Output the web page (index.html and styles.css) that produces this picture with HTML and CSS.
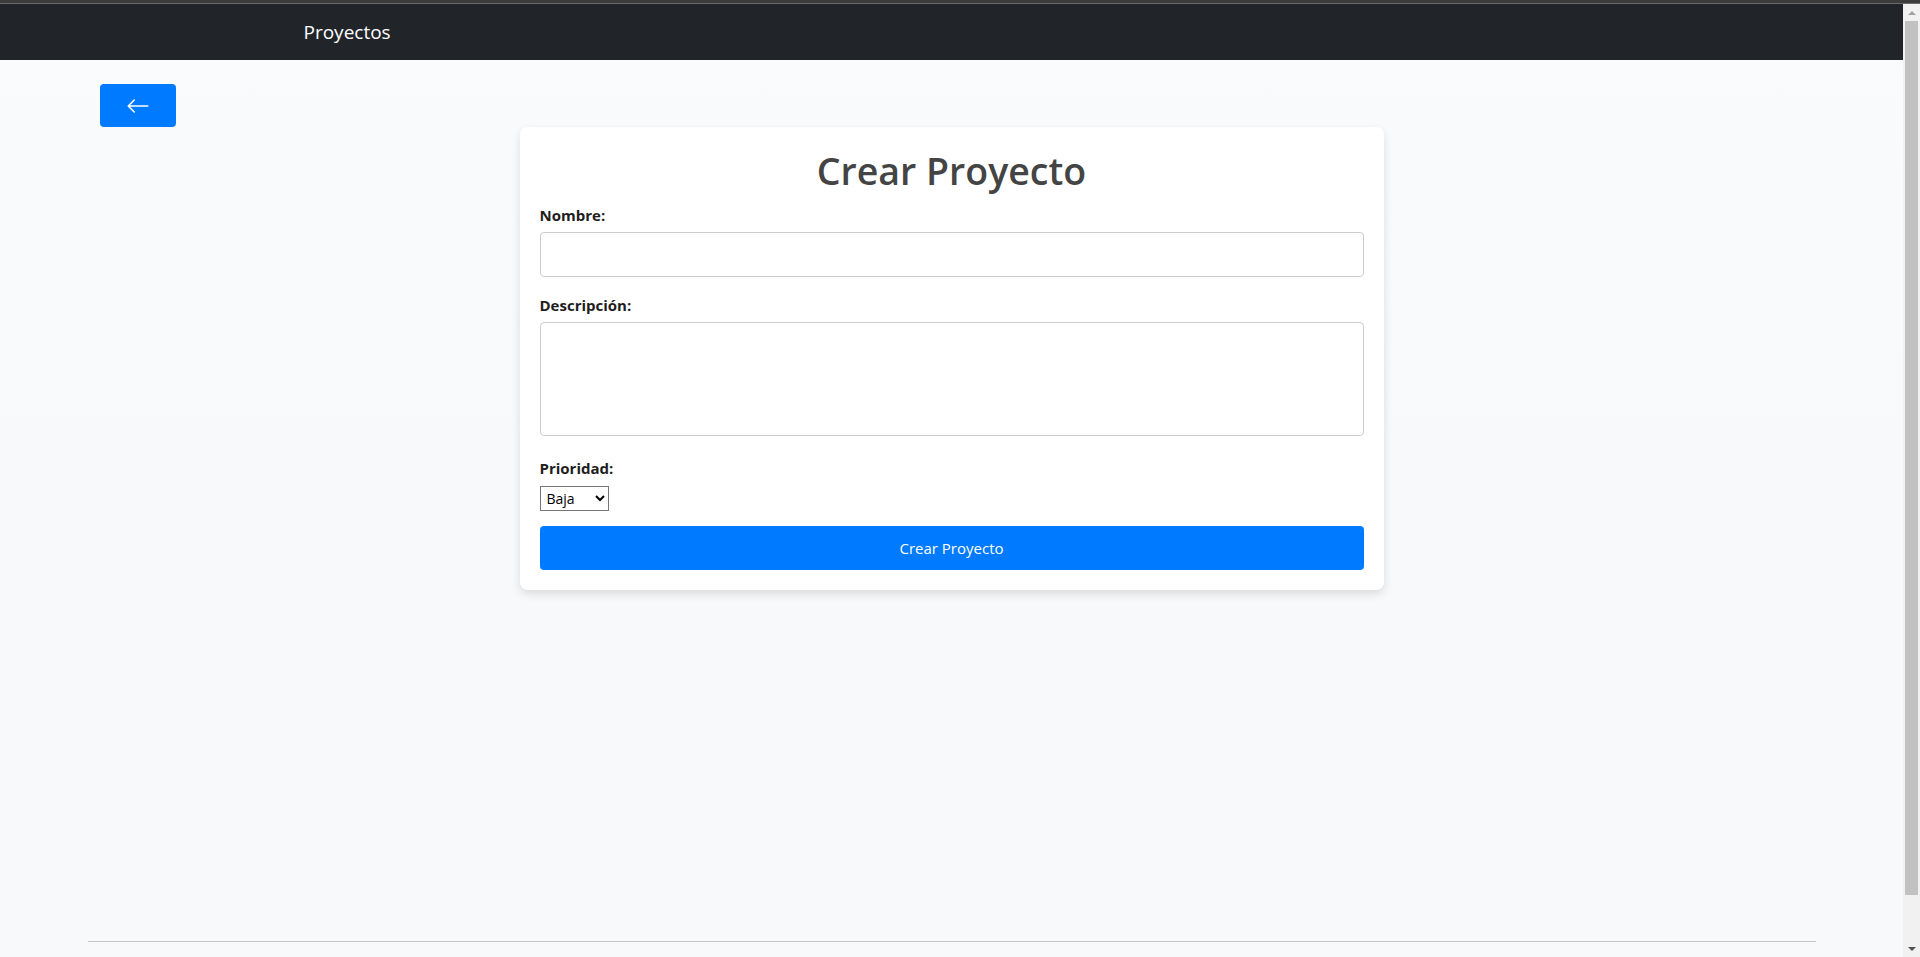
FILE: index.html
```html
<!DOCTYPE html>
<html lang="es">
<head>
<meta charset="utf-8">
<title>Crear Proyecto</title>
<link rel="stylesheet" href="styles.css">
</head>
<body>
<div class="window">
  <div class="topband"></div>
  <div class="viewport">
    <div class="page">
      <nav class="navbar">
        <div class="container">
          <a class="brand" href="#">Proyectos</a>
        </div>
      </nav>
      <main class="main">
        <div class="back-row">
          <button class="btn-back" type="button" aria-label="Volver">
            <svg width="24" height="24" viewBox="0 0 16 16" fill="currentColor"><path fill-rule="evenodd" d="M15 8a.5.5 0 0 0-.5-.5H2.707l3.147-3.146a.5.5 0 1 0-.708-.708l-4 4a.5.5 0 0 0 0 .708l4 4a.5.5 0 0 0 .708-.708L2.707 8.5H14.5A.5.5 0 0 0 15 8z"/></svg>
          </button>
        </div>
        <div class="card">
          <h1 class="title">Crear Proyecto</h1>
          <form class="form">
            <label class="label" for="nombre">Nombre:</label>
            <input class="input" id="nombre" type="text">
            <label class="label" for="descripcion">Descripción:</label>
            <textarea class="textarea" id="descripcion"></textarea>
            <label class="label label-prio" for="prioridad">Prioridad:</label>
            <select class="select" id="prioridad">
              <option>Baja</option>
              <option>Media</option>
              <option>Alta</option>
            </select>
            <button class="btn-submit" type="button">Crear Proyecto</button>
          </form>
        </div>
      </main>
      <footer class="footer"><div class="footer-line"></div></footer>
    </div>
    <div class="scrollbar">
      <div class="sb-btn"><span class="tri-up"></span></div>
      <div class="sb-track"><div class="sb-thumb"></div></div>
      <div class="sb-btn"><span class="tri-down"></span></div>
    </div>
  </div>
</div>
</body>
</html>
```

FILE: styles.css
```css
* { box-sizing: border-box; }
html, body { margin: 0; padding: 0; height: 100%; overflow: hidden; }
body {
  font-family: "Open Sans", "Noto Sans", sans-serif;
  background: #f8f9fa;
  color: #212529;
}
.window { display: flex; flex-direction: column; height: 957px; width: 1920px; }
.topband { height: 4px; background: #3c3c3c; border-bottom: 1px solid #6a6a6a; flex: none; }
.viewport { display: flex; flex: 1; min-height: 0; }
.page {
  width: 1903px;
  display: flex;
  flex-direction: column;
  background: linear-gradient(#fafbfc 0, #f8f9fa 45%, #f8f9fa 100%);
}
.navbar { background: #212529; padding: 8px 0; height: 56px; flex: none; }
.container { width: 1320px; margin: 0 auto; padding: 0 12px; }
.brand {
  display: inline-block;
  color: #fff;
  text-decoration: none;
  font-size: 19px;
  line-height: 30px;
  padding: 5px 0;
}
.main { flex: 1; }
.back-row { padding: 24px 0 0 100px; }
.btn-back {
  width: 76px; height: 43px;
  background: #007bff; color: #fff;
  border: 0; border-radius: 4px;
  display: flex; align-items: center; justify-content: center;
  padding: 0;
}
.card {
  width: 864px;
  margin: 0 auto;
  background: #fff;
  border-radius: 8px;
  box-shadow: 0 4px 10px rgba(0,0,0,0.12);
  padding: 20px;
}
.title {
  margin: 0 0 8px;
  text-align: center;
  font-size: 37.5px;
  font-weight: 600;
  line-height: 48px;
  color: #444;
}
.form { display: flex; flex-direction: column; }
.label {
  font-weight: 700;
  font-size: 15px;
  line-height: 24px;
  margin-bottom: 5px;
  color: #1e1e1e;
}
.label-prio { margin-bottom: 6px; }
.input {
  height: 45px;
  border: 1px solid #ccc;
  border-radius: 4px;
  margin: 0 0 16px;
  background: #fff;
}
.textarea {
  height: 114px;
  border: 1px solid #ccc;
  border-radius: 4px;
  margin: 0 0 20px;
  resize: none;
  background: #fff;
}
.select {
  align-self: flex-start;
  width: 69px;
  height: 25px;
  font-family: "Open Sans", sans-serif;
  font-size: 14px;
  border: 1px solid #767676;
  border-radius: 0;
  background: #fff;
  color: #000;
  margin: 0 0 15px;
  padding: 0 2px;
}
.btn-submit {
  height: 44px;
  width: 100%;
  background: #007bff;
  color: #fff;
  border: 0;
  border-radius: 4px;
  font-family: "Open Sans", sans-serif;
  font-size: 15px;
}
.footer { padding: 0 87px 15px 88px; flex: none; }
.footer-line { height: 1px; background: #c8c8c8; }
.scrollbar {
  width: 17px;
  background: #f1f1f1;
  display: flex;
  flex-direction: column;
}
.sb-btn { height: 17px; display: flex; align-items: center; justify-content: center; flex: none; }
.tri-up { width: 0; height: 0; border-left: 4px solid transparent; border-right: 4px solid transparent; border-bottom: 4px solid #a3a3a3; }
.tri-down { width: 0; height: 0; border-left: 4px solid transparent; border-right: 4px solid transparent; border-top: 4px solid #505050; }
.sb-track { flex: 1; padding: 0 2px; }
.sb-thumb { height: 874px; background: #c1c1c1; }
```
